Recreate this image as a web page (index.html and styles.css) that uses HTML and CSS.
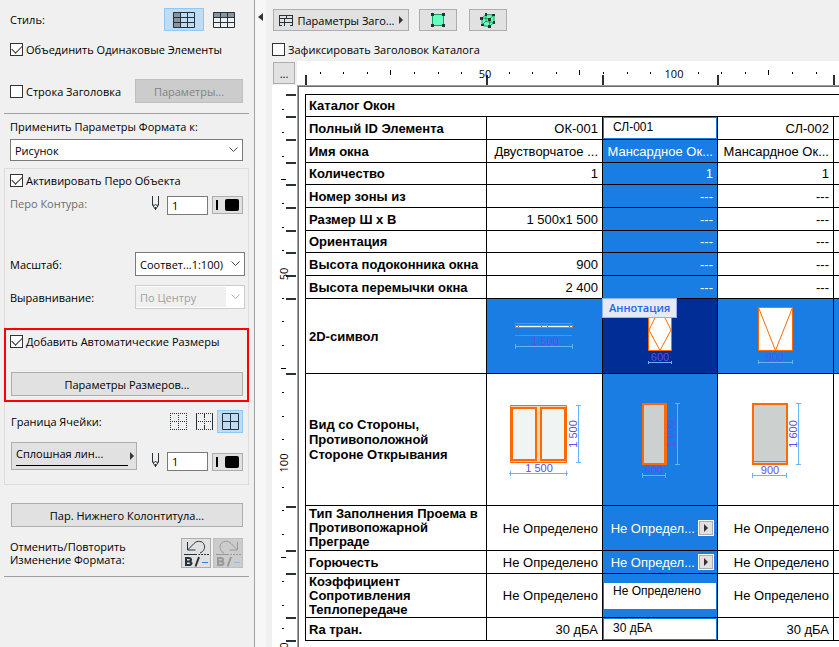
FILE: index.html
```html
<!DOCTYPE html>
<html lang="ru">
<head>
<meta charset="utf-8">
<title>Каталог Окон</title>
<link rel="stylesheet" href="styles.css">
</head>
<body>
<svg width="0" height="0" class="defs" aria-hidden="true">
  <symbol id="pen" viewBox="0 0 9 15"><path d="M1.500 0v9l3 4.500l3-4.500v-9M1.500 8.500q1.500 2 3 0q1.500 2 3 0M4.500 11v3" fill="none" stroke="#26323a"/></symbol>
  <symbol id="undo" viewBox="0 0 28 28">
    <path d="M5.500 3v8h8M5.500 11L12 4.500C15 1 21 2 22 5.500C24 9 21 13 18 14M2 15.500h13M16.500 15.500h1.500M19 15.500h2M22 15.500h2M25 15.500h2" fill="none" stroke="currentColor"/>
    <path d="M4 18v9M4 19h2.500q2.500 0 2.500 1.800q0 1.700-2.500 1.700H4M6.500 22.500q3 0 3 1.800t-3 1.800H4M17 18l-3.500 9.500" fill="none" stroke="currentColor" stroke-width="2"/>
    <path d="M20 23.500h6" class="dash"/>
  </symbol>
</svg>

<aside class="sidebar">
  <div class="row row-style">
    <span class="grow">Стиль:</span>
    <button class="icon-btn is-on" aria-label="Вертикальный">
      <svg width="22" height="16" viewBox="0 0 22 16"><path d="M0 0h8v16H0z" fill="#8b949b"/><path d="M.5.5h21v15H.5zM7.500 0v16M14.500 0v16M0 5.500h22M0 10.500h22" fill="none" stroke="#26323a"/></svg>
    </button>
    <button class="icon-btn" aria-label="Горизонтальный">
      <svg width="22" height="16" viewBox="0 0 22 16"><path d="M0 0h22v5H0z" fill="#8b949b"/><path d="M.5.5h21v15H.5zM7.500 0v16M14.500 0v16M0 5.500h22M0 10.500h22" fill="none" stroke="#26323a"/></svg>
    </button>
  </div>
  <label class="row check gap-check"><input type="checkbox" checked>Объединить Одинаковые Элементы</label>
  <div class="row gap-l3">
    <label class="check grow"><input type="checkbox">Строка Заголовка</label>
    <button class="btn btn-half" disabled>Параметры...</button>
  </div>
  <hr class="gap-rule">
  <div class="row stack gap-s">
    <label for="apply">Применить Параметры Формата к:</label>
    <select id="apply" class="field wide"><option>Рисунок</option></select>
  </div>

  <section class="group">
    <label class="row check"><input type="checkbox" checked>Активировать Перо Объекта</label>
    <div class="row pen-row">
      <label class="grow muted" for="pen1">Перо Контура:</label>
      <svg class="pen" width="9" height="15"><use href="#pen"/></svg>
      <input id="pen1" class="field num" value="1">
      <button class="btn swatch" aria-label="Цвет пера"><i></i><b></b></button>
    </div>
    <div class="row row-select gap-xl">
      <label class="grow" for="scale">Масштаб:</label>
      <select id="scale" class="field"><option>Соответ...1:100)</option></select>
    </div>
    <div class="row row-select gap-d">
      <label class="grow" for="align">Выравнивание:</label>
      <select id="align" class="field" disabled><option>По Центру</option></select>
    </div>
    <div class="auto-dims">
      <label class="row check"><input type="checkbox" checked>Добавить Автоматические Размеры</label>
      <div class="row gap-l2"><button class="btn btn-wide">Параметры Размеров...</button></div>
    </div>
    <div class="row gap-m">
      <span class="grow pad1">Граница Ячейки:</span>
      <button class="icon-btn small" aria-label="Без границ">
        <svg width="17" height="17" viewBox="0 0 17 17"><path d="M0 .5h17M0 8.500h17M0 16.500h17M.5 0v17M8.500 0v17M16.500 0v17" fill="none" stroke="#26323a" stroke-dasharray="1 1" shape-rendering="crispEdges"/></svg>
      </button>
      <button class="icon-btn small" aria-label="Вертикальные границы">
        <svg width="17" height="17" viewBox="0 0 17 17"><path d="M0 .5h17M0 8.500h17M0 16.500h17M8.500 0v17" fill="none" stroke="#26323a" stroke-dasharray="1 1" shape-rendering="crispEdges"/><path d="M.5 0v17M16.500 0v17M8.500 0v4M8.500 13v4" stroke="#26323a"/></svg>
      </button>
      <button class="icon-btn small is-on" aria-label="Все границы">
        <svg width="17" height="17" viewBox="0 0 17 17"><path d="M.5.5h16v16H.5zM8.500 0v17M0 8.500h17" fill="none" stroke="#26323a"/></svg>
      </button>
    </div>
    <div class="row line-row">
      <button class="btn line-type"><span>Сплошная лин...</span></button>
      <span class="grow"></span>
      <svg class="pen" width="9" height="15"><use href="#pen"/></svg>
      <input class="field num" value="1" aria-label="Перо границы">
      <button class="btn swatch" aria-label="Цвет пера"><i></i><b></b></button>
    </div>
  </section>

  <div class="row gap-l"><button class="btn btn-wide">Пар. Нижнего Колонтитула...</button></div>
  <div class="row undo-row">
    <span class="grow">Отменить/Повторить<br>Изменение Формата:</span>
    <button class="btn square" aria-label="Отменить"><svg width="28" height="28"><use href="#undo"/></svg></button>
    <button class="btn square" disabled aria-label="Повторить"><svg width="28" height="28" viewBox="0 0 28 28">
      <path d="M23.500 3v8h-8M23.500 11L17 4.500C14 1 8 2 6.500 5.500C5 9 7 13 10 14M2 15.500h13M16.500 15.500h1.500M19 15.500h2M22 15.500h2M25 15.500h2" fill="none" stroke="currentColor"/>
      <path d="M4 18v9M4 19h2.500q2.500 0 2.500 1.800q0 1.700-2.500 1.700H4M6.500 22.500q3 0 3 1.800t-3 1.800H4M17 18l-3.500 9.500" fill="none" stroke="currentColor" stroke-width="2"/>
      <path d="M20 23.500h6" class="dash"/></svg></button>
  </div>
  <hr class="gap-end">
</aside>

<div class="splitter"><svg width="5" height="8" viewBox="0 0 5 8"><path d="M5 0v8L0 4z" fill="#333"/></svg></div>

<main>
  <div class="toolbar">
    <button class="btn header-btn">
      <svg width="14" height="11" viewBox="0 0 14 11"><path d="M0 .5h14M.5 0v11M13.500 0v11M0 3.500h14M0 7.500h14M0 10.500h3M11 10.500h3M7.500 0v3M5.500 4v7" fill="none" stroke="#26323a"/></svg>
      <span>Параметры Заго...</span>
      <svg width="4" height="8" viewBox="0 0 4 8"><path d="M0 0v8l4-4z" fill="#333"/></svg>
    </button>
    <button class="btn tool" aria-label="Выделить на плане">
      <svg width="14" height="14" viewBox="0 0 14 14"><path d="M1.500 1.500h11v11h-11z" fill="#66ffc2" stroke="#12a04e"/><path d="M0 0h3v3H0zM11 0h3v3h-3zM0 11h3v3H0zM11 11h3v3h-3z" fill="#26323a"/></svg>
    </button>
    <button class="btn tool" aria-label="Выделить в 3D">
      <svg width="16" height="15" viewBox="0 0 16 15"><path d="M2 5L6 1.500l8 .5v7.500L9.500 13.500l-7.500-1z" fill="#66ffc2" stroke="#12a04e"/><path d="M2 5l7.500 1L14 2M9.500 6v7M6 2v6L2 12M6 8.500l8 1" fill="none" stroke="#12a04e"/><path d="M0 4h3v3H0zM5 0h2v3H5zM12 1h3v2h-3zM8 5h3v3H8zM13 8h2v3h-2zM1 11h3v2H1zM8 12h3v3H8z" fill="#26323a"/></svg>
    </button>
  </div>
  <label class="check fix-head"><input type="checkbox">Зафиксировать Заголовок Каталога</label>

  <div class="sheet">
    <button class="btn corner">...</button>
    <svg class="ruler ruler-h" height="24" width="100%">
      <g transform="translate(-1 0)">
      <path class="minor" d="M24.500 11v2M47.500 11v2M71.500 11v2M94.500 9v5M118.500 11v2M142.500 11v2M165.500 11v2M213.500 11v2M236.500 11v2M260.500 11v2M283.500 9v5M307.500 11v2M331.500 11v2M354.500 11v2M402.500 11v2M425.500 11v2M449.500 11v2M472.500 9v5M496.500 11v2M520.500 11v2"/>
      <path class="major" d="M10 14v10M191 14v10M307 14v10M422 14v10M538 14v10"/>
      <text x="189" y="17">50</text><text x="378" y="17">100</text>
      </g>
    </svg>
    <svg class="ruler ruler-v" width="25" height="100%">
      <path class="minor" d="M10 24.500h2M10 47.500h2M10 71.500h2M9 94.500h5M10 118.500h2M10 142.500h2M10 165.500h2M10 213.500h2M10 236.500h2M10 260.500h2M9 283.500h5M10 307.500h2M10 331.500h2M10 354.500h2M10 402.500h2M10 425.500h2M10 449.500h2M9 472.500h5M10 496.500h2M10 520.500h2M10 543.500h2"/>
      <path class="major" d="M14 10h10M14 32h10M14 55h10M14 78h10M14 100h10M14 123h10M14 146h10M14 168h10M14 191h10M14 214h10M14 289h10M14 422h10M14 466h10M14 489h10M14 533h10M14 556h10"/>
      <text transform="translate(16 189) rotate(-90)">50</text><text transform="translate(16 378) rotate(-90)">100</text><text transform="translate(16 567) rotate(-90)">150</text>
    </svg>
    <div class="canvas">
      <table>
        <colgroup><col class="c-name"><col class="c-val"><col class="c-sel"><col class="c-val"><col></colgroup>
        <tr><th colspan="5">Каталог Окон</th></tr>
        <tr><th>Полный ID Элемента</th><td>ОК-001</td><td class="edit"><input value="СЛ-001" aria-label="Полный ID Элемента"></td><td>СЛ-002</td><td></td></tr>
        <tr><th>Имя окна</th><td>Двустворчатое ...</td><td class="sel">Мансардное Ок...</td><td>Мансардное Ок...</td><td></td></tr>
        <tr><th>Количество</th><td>1</td><td class="sel">1</td><td>1</td><td></td></tr>
        <tr><th>Номер зоны из</th><td></td><td class="sel">---</td><td>---</td><td></td></tr>
        <tr><th>Размер Ш x В</th><td>1 500x1 500</td><td class="sel">---</td><td>---</td><td></td></tr>
        <tr><th>Ориентация</th><td></td><td class="sel">---</td><td>---</td><td></td></tr>
        <tr><th>Высота подоконника окна</th><td>900</td><td class="sel">---</td><td>---</td><td></td></tr>
        <tr><th>Высота перемычки окна</th><td>2 400</td><td class="sel">---</td><td>---</td><td></td></tr>
        <tr class="plan">
          <th>2D-символ</th>
          <td class="sel art"><svg width="115" height="74">
            <path class="o" d="M28 24.500h57M28 36.500h57"/><path class="o w" d="M28.500 26.500h57v2h-57z"/><path class="o" d="M31.500 26v3M54.500 26v3M60.500 26v3M82.500 26v3"/>
            <path class="d" d="M28 47.500h58M28.500 45v5M85.500 45v5"/><text x="58" y="46">1 500</text></svg></td>
          <td class="active art"><svg width="114" height="74">
            <path class="o w" d="M45.500 8.500h23v43h-23z"/><path class="o" d="M57 8.500L46 31l11 20.500L68 31z"/>
            <path class="d" d="M45 63.500h24M45.500 62v3M68.500 62v3"/><text x="57" y="62">600</text></svg>
            <div class="tip">Аннотация</div></td>
          <td class="sel art"><svg width="115" height="74">
            <path class="o w" d="M40.500 8.500h34v43h-34z"/><path class="o" d="M40.500 8.500l17 43l17-43"/>
            <path class="d" d="M40 63.500h35M40.500 61v4M74.500 61v4"/><text x="57" y="62">900</text></svg></td>
          <td class="sel"></td>
        </tr>
        <tr class="view">
          <th>Вид со Стороны,<br>Противоположной<br>Стороне Открывания</th>
          <td class="art"><svg width="115" height="131">
            <path class="o frame" d="M23.500 31.500h56v57h-56z"/><path class="o t glass" d="M25 34h24v52h-24zM54 34h24v52h-24z"/>
            <path class="d" d="M22 99.500h59M23.500 97v5M79.500 97v5M91.500 31v58M89 31.500h5M89 88.500h5"/>
            <text x="52" y="98">1 500</text><text transform="translate(90 60) rotate(-90)">1 500</text></svg></td>
          <td class="sel art"><svg width="114" height="131">
            <path class="o t pane" d="M40 30h23v60h-23z"/><path class="o" d="M61.500 29v62"/>
            <path class="d" d="M39 101.500h24M39.500 99v5M62.500 99v5M74.500 29v61M72 29.500h5M72 90.500h5"/>
            <text x="51" y="100">600</text><text transform="translate(72 60) rotate(-90)">1 600</text></svg></td>
          <td class="art"><svg width="115" height="131">
            <path class="o t pane" d="M35 30h34v60h-34z"/><path class="o" d="M35 87.500h34"/>
            <path class="d" d="M34 101.500h35M34.500 99v5M68.500 99v5M80.500 29v61M78 29.500h5M78 90.500h5"/>
            <text x="52" y="100">900</text><text transform="translate(79 60) rotate(-90)">1 600</text></svg></td>
          <td></td>
        </tr>
        <tr class="fill"><th>Тип Заполнения Проема в Противопожарной Преграде</th><td>Не Определено</td><td class="sel"><div class="pick">Не Определ...<button aria-label="Выбрать"></button></div></td><td>Не Определено</td><td></td></tr>
        <tr><th>Горючесть</th><td>Не Определено</td><td class="sel"><div class="pick">Не Определ...<button aria-label="Выбрать"></button></div></td><td>Не Определено</td><td></td></tr>
        <tr class="coef"><th>Коэффициент Сопротивления Теплопередаче</th><td>Не Определено</td><td class="edit"><input value="Не Определено" aria-label="Коэффициент Сопротивления Теплопередаче"></td><td>Не Определено</td><td></td></tr>
        <tr><th>Rа тран.</th><td>30 дБА</td><td class="edit"><input value="30 дБА" aria-label="Rа тран."></td><td>30 дБА</td><td></td></tr>
      </table>
    </div>
  </div>
</main>
</body>
</html>
```
FILE: styles.css
```css
* { box-sizing: border-box; }

body {
  margin: 0;
  display: flex;
  height: 100vh;
  overflow: hidden;
  background: #f0f0f0;
  color: #000;
  font: 11px/15px "Open Sans", "Noto Sans", sans-serif;
}
button, input, select { font: inherit; color: inherit; margin: 0; }
svg { display: block; flex: none; }
.defs { position: absolute; }
hr { border: 0; height: 1px; background: #a0a0a0; margin: 0; }

/* Sidebar */
.sidebar {
  flex: 0 0 255px;
  padding: 8px 5px 0 4px;
  border-right: 1px solid #a0a0a0;
  white-space: nowrap;
}
.row { display: flex; align-items: center; padding: 0 6px; min-height: 23px; }
.sidebar .row-style { padding-right: 5px; }
.group > .row { padding: 0 5px; }
.stack { flex-direction: column; align-items: stretch; gap: 5px; }
.grow { flex: 1; }
.pad1 { padding-left: 1px; }
.muted { color: #6d6d6d; }
.gap-s { margin-top: 5px; }
.gap-check { margin-top: 7px; }
.gap-m { margin-top: 8px; }
.gap-d { margin-top: 9px; }
.gap-l { margin-top: 18px; }
.gap-l2 { margin-top: 19px; }
.gap-l3 { margin-top: 18px; }
.gap-rule { margin-top: 10px; }
.gap-end { margin-top: 8px; }

.check { display: flex; align-items: center; gap: 3px; }
.check input {
  appearance: none;
  width: 13px;
  height: 13px;
  border: 1px solid #333;
  background: #fff;
  display: grid;
  place-items: center;
}
.check input:checked::after {
  content: "";
  width: 9px;
  height: 5px;
  margin-top: -3px;
  border: solid #333;
  border-width: 0 0 1px 1px;
  transform: rotate(-45deg);
}

.btn {
  border: 1px solid #adadad;
  background: #e1e1e1;
  padding: 0;
  height: 24px;
  display: flex;
  align-items: center;
  justify-content: center;
}
.btn:disabled { background: #ccc; border-color: #bfbfbf; color: #838383; }
.btn-half { width: 108px; }
.btn-wide { flex: 1; margin-left: 1px; }
.icon-btn {
  width: 40px;
  height: 23px;
  padding: 0;
  border: 1px solid transparent;
  background: none;
  display: grid;
  place-items: center;
}
.icon-btn.small { width: 26px; }
.icon-btn.is-on { background: #c0dcf3; border-color: #90c8f6; }

.field {
  border: 1px solid #7a7a7a;
  border-radius: 0;
  background: #fff;
  height: 24px;
  outline: 0;
}
select.field {
  appearance: none;
  width: 110px;
  padding: 0 4px;
  background: #fff url("data:image/svg+xml,%3Csvg xmlns='http://www.w3.org/2000/svg' width='9' height='6'%3E%3Cpath d='M.5.5l4 4l4-4' fill='none' stroke='%23444'/%3E%3C/svg%3E") no-repeat right 4px center;
}
select.wide { width: 100%; height: 22px; }
select.field:disabled {
  opacity: 1;
  color: #a0a0a0;
  border-color: #ccc;
  background-image: url("data:image/svg+xml,%3Csvg xmlns='http://www.w3.org/2000/svg' width='9' height='6'%3E%3Cpath d='M.5.5l4 4l4-4' fill='none' stroke='%23aaa'/%3E%3C/svg%3E"), linear-gradient(#f0f0f0, #f0f0f0);
  background-size: auto, 90px 20px;
  background-position: right 4px center, 0 1px;
}
.num { width: 41px; height: 19px; padding: 0 4px; }
.pen { margin-right: 7px; align-self: flex-start; }
.swatch { width: 31px; height: 18px; margin-left: 4px; gap: 7px; }
.swatch i { width: 2px; height: 10px; background: #000; }
.swatch b { width: 14px; height: 12px; border-radius: 2px; background: #000; }

.group { border: 1px solid #dcdcdc; margin-top: 7px; padding-bottom: 13px; }
.pen-row { margin-top: 4px; min-height: 19px; align-items: flex-start; }
.gap-xl { margin-top: 37px; }
.group > .row-select { padding-right: 3px; }
.auto-dims { border: 2px solid #f00; margin: 19px -1px 0; padding-bottom: 4px; }
.auto-dims .row { padding: 0 4px; }
.line-row { margin-top: 9px; align-items: flex-end; }
.line-row .pen { align-self: flex-end; margin-bottom: 3px; }
.line-type {
  width: 126px;
  height: 28px;
  margin: 0 0 1px 1px;
  padding: 0 2px 0 4px;
  justify-content: space-between;
}
.line-type span { width: 112px; height: 20px; line-height: 15px; text-align: left; border-bottom: 1px solid #000; }
.line-type::after, .pick button::after {
  content: "";
  border: solid transparent;
  border-width: 4px 0 4px 4px;
  border-left-color: #333;
}
.undo-row { margin-top: 11px; line-height: 13px; }
.square { width: 30px; height: 30px; margin-left: 2px; color: #26323a; }
.square:disabled { color: #999; }
.dash { stroke: #2f7ff0; }
.square:disabled .dash { stroke: #8ab8f0; }

.splitter { flex: 0 0 11px; background: #f7f7f7; padding: 13px 0 0 3px; }

/* Catalogue */
main { flex: 1; min-width: 0; display: flex; flex-direction: column; padding: 9px 0 0 6px; }
.toolbar { display: flex; padding-left: 1px; }
.toolbar .btn { height: 22px; }
.header-btn { width: 136px; gap: 5px; margin-right: 10px; }
.tool { width: 38px; margin-right: 12px; }
.fix-head { margin-top: 7px; height: 23px; }
.sheet { flex: 1; min-height: 0; display: grid; grid-template: 24px 1fr / 25px 1fr; }
.corner { width: 22px; height: 22px; margin: 1px; }
.ruler { background: #fff; overflow: hidden; }
.ruler .minor { stroke: #000; }
.ruler .major { stroke: #26323a; stroke-width: 2; }
.ruler text { text-anchor: middle; }
.canvas {
  min-width: 0;
  overflow: hidden;
  background: #fff;
  border: solid #a0a0a0;
  border-width: 1px 0 0 1px;
  box-shadow: inset 1px 1px #696969;
  padding: 8px 0 0 7px;
}
table {
  width: 100%;
  table-layout: fixed;
  border-spacing: 0;
  border: solid #000;
  border-width: 1px 0 0 1px;
  font: 13px/15px "Liberation Sans", Arial, sans-serif;
}
.c-name { width: 181px; }
.c-val { width: 116px; }
.c-sel { width: 115px; }
th, td {
  height: 23px;
  padding: 0 3px;
  border: solid #000;
  border-width: 0 1px 1px 0;
  text-align: right;
  white-space: nowrap;
}
td { padding-right: 4px; }
tr:nth-child(-n+7):nth-child(3n+1) > * { height: 22px; }
tr > :last-child { border-right: 0; }
th { text-align: left; white-space: normal; }
.plan > * { height: 75px; }
.view > * { height: 132px; }
.fill > * { height: 45px; }
.coef > * { height: 44px; }
.fill th, .coef th { line-height: 14px; }
.sel, .edit { background: #1a7de3; color: #fff; }
.active { background: #002d96; }
td.edit { padding: 1px; }
.edit input {
  display: block;
  width: 100%;
  height: 20px;
  border: 0;
  outline: 0;
  padding: 0 9px 3px;
  background: #fff;
  color: #000;
  font-size: 12px;
}
.coef .edit input { height: 26px; padding-bottom: 9px; }
.pick { display: flex; align-items: center; justify-content: flex-end; gap: 3px; margin-right: -1px; }
.pick button {
  width: 16px;
  height: 16px;
  padding: 0;
  border: 1px solid #fff;
  background: #e1e1e1;
  box-shadow: inset 0 0 0 1px #adadad;
  display: grid;
  place-items: center;
}
td.art { padding: 0; position: relative; }
.art text { font-size: 11px; fill: #5b50f0; text-anchor: middle; }
.o { stroke: #ff6a00; fill: none; }
.w { fill: #fff; }
.t { stroke-width: 2; }
.frame { fill: #f5d2b0; }
.glass { fill: #f0f5f3; }
.pane { fill: #ccd1cf; }
.d { stroke: #64b4ff; fill: none; }
.tip {
  position: absolute;
  top: -1px;
  left: -1px;
  height: 20px;
  padding: 0 6px;
  border: 1px solid #8fb4ff;
  background: #e6eaf6;
  color: #2463ee;
  font: 600 11px/18px "Open Sans", "Noto Sans", sans-serif;
}
```
